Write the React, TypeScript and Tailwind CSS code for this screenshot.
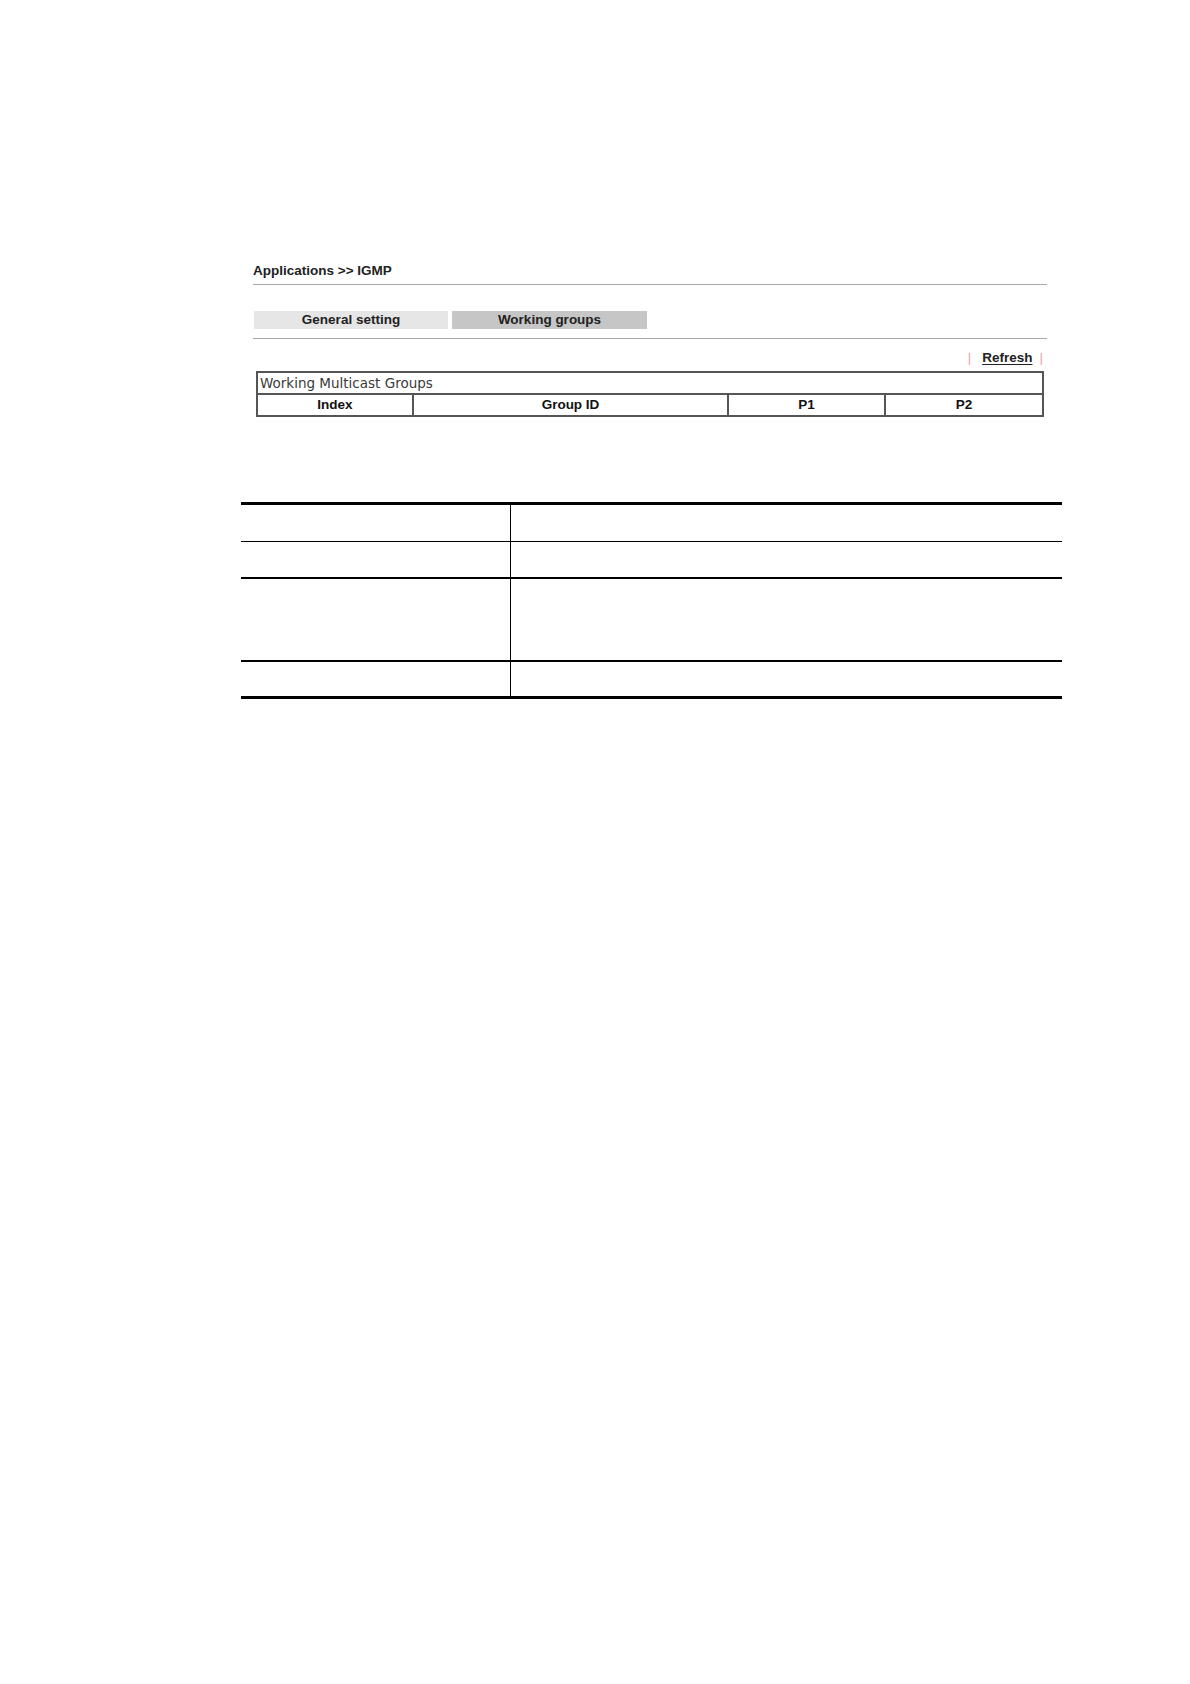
import React from "react";

const arial = { fontFamily: '"Liberation Sans", Arial, sans-serif' };

export default function App() {
  return (
    <div className="w-[1190px] h-[1684px] bg-white relative" style={arial}>
      {/* Router page screenshot */}
      <div className="ml-[253px] w-[794px] pt-[263px]">
        <div className="h-[16px] leading-[16px] text-[13.5px] font-bold text-[#222]">
          Applications &gt;&gt; IGMP
        </div>
        <div className="mt-[5px] h-px bg-[#a8a8a8]" />
        <div className="mt-[26px] flex gap-[4px] pl-[1px]">
          <div className="w-[194px] h-[18px] bg-[#e6e6e6] flex items-center justify-center text-[13.5px] font-bold text-[#222]">
            General setting
          </div>
          <div className="w-[195px] h-[18px] bg-[#c6c6c6] flex items-center justify-center text-[13.5px] font-bold text-[#222]">
            Working groups
          </div>
        </div>
        <div className="mt-[9px] h-px bg-[#a8a8a8]" />
        <div className="mt-[11px] h-[16px] flex items-center justify-end pr-[4px] text-[13.5px] leading-[16px]">
          <span className="text-[#f0a0a8] font-normal">|</span>
          <span className="ml-[11px] mr-[5px] font-bold text-[#222] underline underline-offset-2">Refresh</span>
          <span className="ml-[2px] text-[#f0a0a8] font-normal">|</span>
        </div>
        <div className="mt-[5px] ml-[3px] mr-[3px] border-2 border-[#555]">
          <div
            className="h-[22px] flex items-center pl-[2px] text-[13.5px] text-[#3a3a3a] border-b-2 border-[#555]"
            style={{ fontFamily: '"DejaVu Sans", Verdana, sans-serif' }}
          >
            Working Multicast Groups
          </div>
          <div className="h-[20px] flex text-[13.5px] font-bold text-[#111]">
            <div className="w-[156px] border-r-2 border-[#555] flex items-center justify-center">Index</div>
            <div className="w-[315px] border-r-2 border-[#555] flex items-center justify-center">Group ID</div>
            <div className="w-[157px] border-r-2 border-[#555] flex items-center justify-center">P1</div>
            <div className="flex-1 flex items-center justify-center">P2</div>
          </div>
        </div>
      </div>

      {/* Document description table (empty) */}
      <div className="ml-[241px] w-[821px] mt-[85px]">
        <div className="h-[39px] flex border-t-[3px] border-black">
          <div className="w-[270px] border-r border-black" />
          <div className="flex-1" />
        </div>
        <div className="h-[36px] flex border-t border-black">
          <div className="w-[270px] border-r border-black" />
          <div className="flex-1" />
        </div>
        <div className="h-[83px] flex border-t-2 border-black">
          <div className="w-[270px] border-r border-black" />
          <div className="flex-1" />
        </div>
        <div className="h-[39px] flex border-t-2 border-b-[3px] border-black">
          <div className="w-[270px] border-r border-black" />
          <div className="flex-1" />
        </div>
      </div>
    </div>
  );
}
